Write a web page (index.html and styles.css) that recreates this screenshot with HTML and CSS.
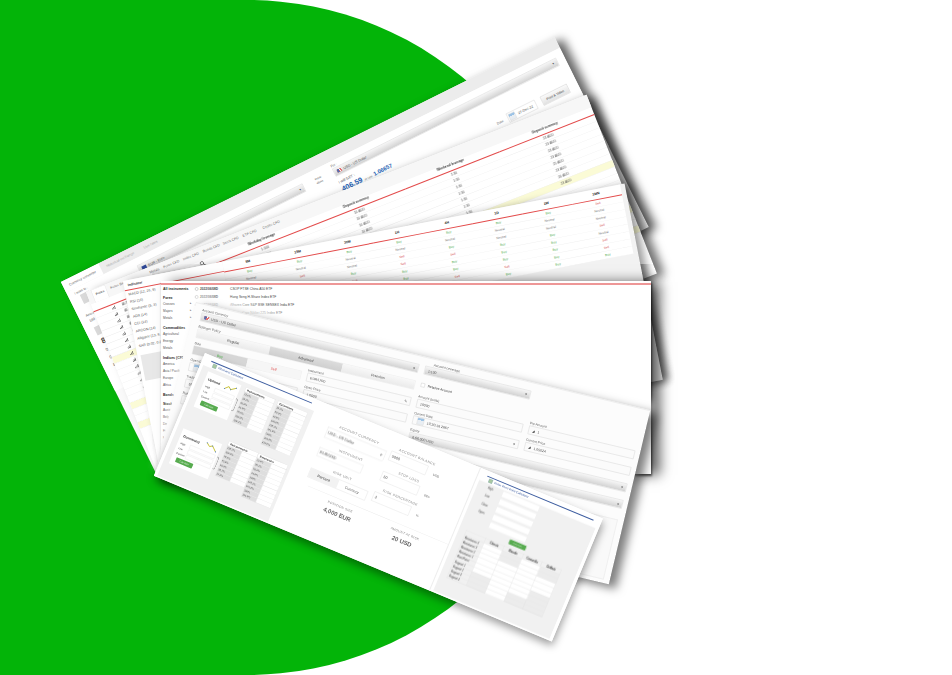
FILE: index.html
```html
<!DOCTYPE html>
<html lang="en">
<head>
<meta charset="utf-8">
<title>Trading tools</title>
<link rel="stylesheet" href="styles.css">
</head>
<body>
<div class="stage">
  <div class="blob"></div>
  <div class="fan">

    <section class="card card-a">
      <nav class="a-tabs">
        <span class="a-tab on">Currency converter</span>
        <span class="a-tab">Historical exchange</span>
        <span class="a-tab">Live rates</span>
      </nav>
      <div class="a-body">
        <div class="a-left">
          <div class="lbl">I want to :</div>
          <div class="sq"></div>
          <div class="lbl mt">Amount</div>
          <div class="a-amt">100</div>
          <div class="sq small"></div>
          <div class="a-big">81</div>
          <div class="a-n">0 1</div>
          <div class="a-n">0 1</div>
          <div class="a-n">81</div>
        </div>
        <div class="a-sel">
          <div class="select"><i class="flag eu"></i>EUR - Euro<b class="arrow">▾</b></div>
        </div>
        <div class="a-mid">inside<br>above</div>
        <div class="a-right">
          <div class="lbl">For :</div>
          <div class="select"><i class="flag us"></i>USD - US Dollar<b class="arrow">▾</b></div>
          <div class="a-get">I will GET :</div>
          <div class="a-val"><strong>406.59</strong><small>at rate</small><strong class="rate">1.06657</strong></div>
          <div class="a-date">
            <span class="lbl">Date</span>
            <span class="datebox"><i class="cal"></i>27-Dec-22</span>
            <span class="btn">Print &amp; Video</span>
          </div>
        </div>
      </div>
    </section>

    <section class="card card-b">
      <nav class="b-tabs">
        <span class="b-tab on">Forex</span><span class="b-tab">Forex Basket</span><span class="b-tab">Metals</span><span class="b-tab">Forex CFD</span><span class="b-tab">Index CFD</span><span class="b-tab">Bonds CFD</span><span class="b-tab">Stock CFD</span><span class="b-tab">ETF CFD</span><span class="b-tab">Crypto CFD</span>
      </nav>
      <table class="b-table">
        <thead>
          <tr><th class="c0"></th><th class="c1"><svg class="mag" viewBox="0 0 20 20"><circle cx="8" cy="8" r="5.5"/><path d="M12 12l6 6"/></svg></th><th>Weekday leverage</th><th>Deposit currency</th><th>Weekend leverage</th><th>Deposit currency</th></tr>
        </thead>
        <tbody>
          <tr><td class="c0"><svg class="bars" viewBox="0 0 12 12"><path d="M1 11h2V7H1zM5 11h2V4H5zM9 11h2V1H9z"/></svg>AUD/CAD</td><td></td><td>1:100</td><td>10 AUD</td><td>1:30</td><td>23 AUD</td></tr>
          <tr><td class="c0"><svg class="bars" viewBox="0 0 12 12"><path d="M1 11h2V7H1zM5 11h2V4H5zM9 11h2V1H9z"/></svg>AUD/CHF</td><td></td><td>1:100</td><td>10 AUD</td><td>1:30</td><td>23 AUD</td></tr>
          <tr><td class="c0"><svg class="bars" viewBox="0 0 12 12"><path d="M1 11h2V7H1zM5 11h2V4H5zM9 11h2V1H9z"/></svg>AUD/JPY</td><td></td><td>1:100</td><td>10 AUD</td><td>1:30</td><td>23 AUD</td></tr>
          <tr><td class="c0"><svg class="bars" viewBox="0 0 12 12"><path d="M1 11h2V7H1zM5 11h2V4H5zM9 11h2V1H9z"/></svg>AUD/NZD</td><td></td><td>1:100</td><td>10 AUD</td><td>1:30</td><td>23 AUD</td></tr>
          <tr><td class="c0"><svg class="bars" viewBox="0 0 12 12"><path d="M1 11h2V7H1zM5 11h2V4H5zM9 11h2V1H9z"/></svg>AUD/USD</td><td></td><td>1:100</td><td>10 AUD</td><td>1:30</td><td>25 AUD</td></tr>
          <tr><td class="c0"><svg class="bars" viewBox="0 0 12 12"><path d="M1 11h2V7H1zM5 11h2V4H5zM9 11h2V1H9z"/></svg>AUD/SGD</td><td></td><td>1:100</td><td>10 AUD</td><td>1:30</td><td>23 AUD</td></tr>
          <tr><td class="c0"><svg class="bars" viewBox="0 0 12 12"><path d="M1 11h2V7H1zM5 11h2V4H5zM9 11h2V1H9z"/></svg>CAD/CHF</td><td></td><td>1:100</td><td>10 CAD</td><td>1:30</td><td>26 AUD</td></tr>
          <tr class="y"><td class="c0"><svg class="bars" viewBox="0 0 12 12"><path d="M1 11h2V7H1zM5 11h2V4H5zM9 11h2V1H9z"/></svg>CAD/JPY</td><td></td><td>1:100</td><td>10 CAD</td><td>1:30</td><td>23 AUD</td></tr>
          <tr><td class="c0"><svg class="bars" viewBox="0 0 12 12"><path d="M1 11h2V7H1zM5 11h2V4H5zM9 11h2V1H9z"/></svg>SPX500</td><td></td><td></td><td></td><td></td><td></td></tr>
          <tr><td class="c0"><svg class="bars" viewBox="0 0 12 12"><path d="M1 11h2V7H1zM5 11h2V4H5zM9 11h2V1H9z"/></svg>SWI20</td><td></td><td></td><td></td><td></td><td></td></tr>
          <tr><td class="c0"><svg class="bars" viewBox="0 0 12 12"><path d="M1 11h2V7H1zM5 11h2V4H5zM9 11h2V1H9z"/></svg>TRY</td><td></td><td></td><td></td><td></td><td></td></tr>
          <tr><td class="c0"><svg class="bars" viewBox="0 0 12 12"><path d="M1 11h2V7H1zM5 11h2V4H5zM9 11h2V1H9z"/></svg>USD</td><td></td><td></td><td></td><td></td><td></td></tr>
          <tr><td class="c0"><svg class="bars" viewBox="0 0 12 12"><path d="M1 11h2V7H1zM5 11h2V4H5zM9 11h2V1H9z"/></svg>EUR</td><td></td><td></td><td></td><td></td><td></td></tr>
          <tr><td class="c0"><svg class="bars" viewBox="0 0 12 12"><path d="M1 11h2V7H1zM5 11h2V4H5zM9 11h2V1H9z"/></svg>GBP</td><td></td><td></td><td></td><td></td><td></td></tr>
          <tr class="y"><td class="c0"><svg class="bars" viewBox="0 0 12 12"><path d="M1 11h2V7H1zM5 11h2V4H5zM9 11h2V1H9z"/></svg>NZD</td><td></td><td></td><td></td><td></td><td></td></tr>
          <tr><td class="c0"><svg class="bars" viewBox="0 0 12 12"><path d="M1 11h2V7H1zM5 11h2V4H5zM9 11h2V1H9z"/></svg>CHF</td><td></td><td></td><td></td><td></td><td></td></tr>
          <tr><td class="c0"><svg class="bars" viewBox="0 0 12 12"><path d="M1 11h2V7H1zM5 11h2V4H5zM9 11h2V1H9z"/></svg>JPY</td><td></td><td></td><td></td><td></td><td></td></tr>
          <tr class="y"><td class="c0"><svg class="bars" viewBox="0 0 12 12"><path d="M1 11h2V7H1zM5 11h2V4H5zM9 11h2V1H9z"/></svg>CAD</td><td></td><td></td><td></td><td></td><td></td></tr>
        </tbody>
      </table>
    </section>

    <section class="card card-c">
      <aside class="c-side">
        <div class="c-head">Indicator</div>
        <div class="c-i">MACD (12, 26, 9)</div>
        <div class="c-i">RSI (14)</div>
        <div class="c-i">Stochastic (5, 3)</div>
        <div class="c-i">ADX (14)</div>
        <div class="c-i">CCI (14)</div>
        <div class="c-i">AROON (14)</div>
        <div class="c-i">Alligator (13, 8, 5)</div>
        <div class="c-i">SAR (0.02, 0.2)</div>
        <div class="c-box">Indicators</div>
      </aside>
      <table class="c-table">
        <thead><tr><th>5M</th><th>15M</th><th>30M</th><th>1H</th><th>4H</th><th>1D</th><th>1W</th><th>1MN</th></tr></thead>
        <tbody>
          <tr><td class="b">Buy</td><td class="b">Buy</td><td class="b">Buy</td><td class="b">Buy</td><td class="b">Buy</td><td class="b">Buy</td><td class="b">Buy</td><td class="s">Sell</td></tr>
          <tr><td class="n">Neutral</td><td class="n">Neutral</td><td class="n">Neutral</td><td class="n">Neutral</td><td class="n">Neutral</td><td class="n">Neutral</td><td class="n">Neutral</td><td class="n">Neutral</td></tr>
          <tr><td class="n">Neutral</td><td class="s">Sell</td><td class="n">Neutral</td><td class="s">Sell</td><td class="b">Buy</td><td class="n">Neutral</td><td class="n">Neutral</td><td class="n">Neutral</td></tr>
          <tr><td class="s">Sell</td><td class="b">Buy</td><td class="b">Buy</td><td class="s">Sell</td><td class="s">Sell</td><td class="b">Buy</td><td class="b">Buy</td><td class="s">Sell</td></tr>
          <tr><td class="n">Neutral</td><td class="s">Sell</td><td class="s">Sell</td><td class="b">Buy</td><td class="b">Buy</td><td class="b">Buy</td><td class="b">Buy</td><td class="n">Neutral</td></tr>
          <tr><td class="b">Buy</td><td class="b">Buy</td><td class="b">Buy</td><td class="b">Buy</td><td class="b">Buy</td><td class="b">Buy</td><td class="b">Buy</td><td class="s">Sell</td></tr>
          <tr><td class="s">Sell</td><td class="s">Sell</td><td class="b">Buy</td><td class="s">Sell</td><td class="s">Sell</td><td class="s">Sell</td><td class="b">Buy</td><td class="s">Sell</td></tr>
          <tr><td class="b">Buy</td><td class="n">Neutral</td><td class="b">Buy</td><td class="b">Buy</td><td class="b">Buy</td><td class="b">Buy</td><td class="b">Buy</td><td class="b">Buy</td></tr>
        </tbody>
      </table>
    </section>

    <section class="card card-d">
      <aside class="d-side">
        <div class="d-h first">All instruments</div>
        <div class="d-h">Forex</div>
        <div class="d-i">Crosses<b>▸</b></div>
        <div class="d-i">Majors<b>▸</b></div>
        <div class="d-i">Metals<b>▸</b></div>
        <div class="d-h">Commodities</div>
        <div class="d-i">Agricultural<b>▸</b></div>
        <div class="d-i">Energy<b>▸</b></div>
        <div class="d-i">Metals</div>
        <div class="d-h">Indices (CFD)</div>
        <div class="d-i">America</div>
        <div class="d-i">Asia / Pacific</div>
        <div class="d-i">Europe</div>
        <div class="d-i">Africa</div>
        <div class="d-h">Bonds (CFD)</div>
        <div class="d-h">Stocks (CFD)</div>
        <div class="d-i">Austria</div>
        <div class="d-i">Belgium</div>
        <div class="d-i">Denmark</div>
        <div class="d-i">Finland</div>
        <div class="d-i">France</div>
        <div class="d-i">Germany</div>
      </aside>
      <div class="d-list">
        <div class="d-row"><i class="radio"></i><b>2022/06/08D</b><span>CSOP FTSE China A50 ETF</span></div>
        <div class="d-row"><i class="radio"></i><b>2022/06/08D</b><span>Hang Seng H-Share Index ETF</span></div>
        <div class="d-row"><i class="radio"></i><b>2022/06/08D</b><span>iShares Core S&amp;P BSE SENSEX India ETF</span></div>
        <div class="d-row"><i class="radio"></i><b>2022/06/08D</b><span>iShares Core Nikkei 225 Index ETF</span></div>
      </div>
    </section>

    <section class="card card-e">
      <div class="e-grid">
        <div class="e-wide">
          <div class="lbl">Account Currency</div>
          <div class="select"><i class="flag us"></i>USD - US Dollar<b class="arrow">▾</b></div>
        </div>
        <div class="e-span2 e-lev">
          <div class="lbl">Account Leverage</div>
          <div class="select">1:100<b class="arrow">▾</b></div>
        </div>
        <div class="e-wide">
          <div class="lbl">Bollinger Policy</div>
          <div class="seg"><span>Regular</span><span class="dark">Advanced</span><span>Premium</span></div>
        </div>
        <div class="e-span2 e-check"><i class="box"></i>Relative Account</div>
        <div class="e-wide e-pair">
          <div class="e-side">
            <div class="lbl">Side</div>
            <div class="seg"><span class="buy">Buy</span><span class="sell">Sell</span></div>
          </div>
          <div class="e-inst">
            <div class="lbl">Instrument</div>
            <div class="input">EUR/USD<b class="pen">✎</b></div>
          </div>
        </div>
        <div>
          <div class="lbl">Amount (units)</div>
          <div class="input">10000</div>
        </div>
        <div>
          <div class="lbl">Pip Amount</div>
          <div class="input"><i class="mini">◢</i>1</div>
        </div>
        <div class="e-wide e-pair">
          <div class="e-side">
            <div class="lbl">Open Date</div>
            <div class="input"><i class="cal"></i>Jan 01</div>
          </div>
          <div class="e-inst">
            <div class="lbl">Open Price</div>
            <div class="input">1.0500</div>
          </div>
        </div>
        <div>
          <div class="lbl">Current Date</div>
          <div class="input"><i class="cal"></i>10:30:16 2667<b class="arrow">▾</b></div>
        </div>
        <div>
          <div class="lbl">Current Price</div>
          <div class="input"><i class="mini">◢</i>1.05024</div>
        </div>
        <div class="e-wide e-pair">
          <div class="e-side">
            <div class="lbl">Trading Size</div>
            <div class="input">10,000</div>
          </div>
          <div class="e-inst"></div>
        </div>
        <div class="e-span2">
          <div class="lbl">Equity</div>
          <div class="select">6.66.000 USD<b class="arrow">▾</b></div>
        </div>
        <div class="e-wide e-pair">
          <div class="e-side">
            <div class="lbl">Rollover</div>
            <div class="input">1.0200</div>
          </div>
          <div class="e-inst"></div>
        </div>
        <div class="e-span2">
          <div class="lbl">&nbsp;</div>
          <div class="select"><b class="arrow">▾</b></div>
        </div>
      </div>
      <div class="e-panel"></div>
    </section>

    <section class="card card-f">
      <div class="panel p1">
        <header class="p-head"><i class="p-ico"></i>Fibonacci Calculator</header>
        <div class="p-body">
          <div class="fib">
            <div class="fib-card">
              <div class="fib-top"><b>Uptrend</b>
                <svg class="trend" viewBox="0 0 60 36"><path class="tl" d="M4 30L20 14 32 24 54 8"/><circle cx="4" cy="30" r="2.5"/><circle cx="32" cy="24" r="2.5"/><circle cx="54" cy="8" r="2.5"/></svg>
              </div>
              <div class="fib-r"><span>High</span><i></i></div>
              <div class="fib-r"><span>Low</span><i></i></div>
              <div class="fib-r"><span>Custom</span><i></i></div>
              <div class="go">Calculate</div>
            </div>
            <div class="brace"></div>
            <table class="fib-t"><tr><th colspan="2">Retracements</th></tr><tr><td>23.6%</td><td></td></tr><tr><td>38.2%</td><td></td></tr><tr><td>50.0%</td><td></td></tr><tr><td>61.8%</td><td></td></tr><tr><td>78.6%</td><td></td></tr><tr><td>100.0%</td><td></td></tr><tr><td>138.2%</td><td></td></tr></table>
            <table class="fib-t"><tr><th colspan="2">Extensions</th></tr><tr><td>38.2%</td><td></td></tr><tr><td>50.0%</td><td></td></tr><tr><td>61.8%</td><td></td></tr><tr><td>100.0%</td><td></td></tr><tr><td>138.2%</td><td></td></tr><tr><td>161.8%</td><td></td></tr><tr><td>200%</td><td></td></tr><tr><td>261.8%</td><td></td></tr><tr><td>423.6%</td><td></td></tr></table>
          </div>
          <div class="fib low">
            <div class="fib-card">
              <div class="fib-top"><b>Downtrend</b>
                <svg class="trend" viewBox="0 0 60 36"><path class="tl" d="M4 6L20 18 32 10 54 30"/><circle cx="4" cy="6" r="2.5"/><circle cx="32" cy="10" r="2.5"/><circle cx="54" cy="30" r="2.5"/></svg>
              </div>
              <div class="fib-r"><span>High</span><i></i></div>
              <div class="fib-r"><span>Low</span><i></i></div>
              <div class="fib-r"><span>Custom</span><i></i></div>
              <div class="go">Calculate</div>
            </div>
            <div class="brace"></div>
            <table class="fib-t"><tr><th colspan="2">Retracements</th></tr><tr><td>138.2%</td><td></td></tr><tr><td>100.0%</td><td></td></tr><tr><td>78.6%</td><td></td></tr><tr><td>61.8%</td><td></td></tr><tr><td>50.0%</td><td></td></tr><tr><td>38.2%</td><td></td></tr><tr><td>23.6%</td><td></td></tr></table>
            <table class="fib-t"><tr><th colspan="2">Extensions</th></tr><tr><td>23.6%</td><td></td></tr><tr><td>38.2%</td><td></td></tr><tr><td>50.0%</td><td></td></tr><tr><td>61.8%</td><td></td></tr><tr><td>100%</td><td></td></tr><tr><td>138.2%</td><td></td></tr><tr><td>161.8%</td><td></td></tr><tr><td>200%</td><td></td></tr><tr><td>261.8%</td><td></td></tr></table>
          </div>
        </div>
      </div>
      <div class="panel p2">
        <div class="calc">
          <div class="fld"><label>Account currency</label><div class="ctl tall">USD - US Dollar<b>▾</b></div></div>
          <div class="fld up"><label>Account balance</label><div class="ctl">5000<em>USD</em></div></div>
          <div class="fld"><label>Instrument</label><div class="ctl narrow">EUR/USD</div></div>
          <div class="fld up"><label>Stop loss</label><div class="ctl">50<em>pips</em></div></div>
          <div class="fld"><label>Risk unit</label><div class="tog"><span class="on">Percent</span><span>Currency</span></div></div>
          <div class="fld up"><label>Risk percentage</label><div class="ctl">2<em>%</em></div></div>
        </div>
        <div class="res">
          <div><label>Position size</label><strong>4,000 EUR</strong></div>
          <div><label>Amount at risk</label><strong>20 USD</strong></div>
        </div>
      </div>
      <div class="panel p3">
        <header class="p-head"><i class="p-ico"></i>Forex Pivot Point Calculator</header>
        <div class="p-body">
          <div class="piv"><span>High</span><i></i></div>
          <div class="piv"><span>Low</span><i></i></div>
          <div class="piv"><span>Close</span><i></i></div>
          <div class="piv"><span>Open</span><i></i></div>
          <div class="piv"><span></span><i></i></div>
          <div class="go">Calculate</div>
          <table class="piv-t">
            <tr><th></th><th>Classic</th><th>Woodie</th><th>Camarilla</th><th>DeMark</th></tr>
            <tr><td>Resistance 4</td><td></td><td class="g"></td><td></td><td class="g"></td></tr>
            <tr><td>Resistance 3</td><td></td><td class="g"></td><td></td><td class="g"></td></tr>
            <tr><td>Resistance 2</td><td></td><td></td><td></td><td></td></tr>
            <tr><td>Resistance 1</td><td></td><td></td><td></td><td></td></tr>
            <tr><td>Pivot Point</td><td></td><td></td><td></td><td></td></tr>
            <tr><td>Support 1</td><td></td><td></td><td></td><td class="g"></td></tr>
            <tr><td>Support 2</td><td class="g"></td><td></td><td></td><td class="g"></td></tr>
            <tr><td>Support 3</td><td class="g"></td><td></td><td class="g"></td><td class="g"></td></tr>
            <tr><td>Support 4</td><td class="g"></td><td></td><td class="g"></td><td class="g"></td></tr>
          </table>
        </div>
      </div>
    </section>

  </div>
</div>
</body>
</html>
```

FILE: styles.css
```css
* { box-sizing: border-box; }
html, body { margin: 0; background: #fff; }
.stage {
  position: relative;
  width: 952px;
  height: 675px;
  overflow: hidden;
  font-family: "Liberation Sans", Arial, sans-serif;
  color: #444;
}
.blob {
  position: absolute;
  left: 0;
  top: 0;
  width: 585px;
  height: 675px;
  background: #03b408;
  border-radius: 0 337.5px 337.5px 0;
}
.fan { position: absolute; inset: 0; filter: blur(0.45px); }

/* Every card is a page drawn three times larger and scaled down */
.card {
  position: absolute;
  transform-origin: 0 0;
  background: #fff;
  overflow: hidden;
  font-size: 10.5px;
}
.card-a { left: 61px; top: 282px; width: 1653px; height: 636px; transform: rotate(-26.4deg) scale(.3333); background: #fafafa; box-shadow: 21px 15px 30px rgba(0,0,0,.6); overflow: visible; }
.card-b { left: 86.4px; top: 292px; width: 1614px; height: 576px; transform: rotate(-21.5deg) scale(.3333); box-shadow: 21px 12px 30px rgba(0,0,0,.55); overflow: visible; }
.card-c { left: 123px; top: 281px; width: 1533px; height: 600px; transform: rotate(-11deg) scale(.3333); background: #f2f2f2; box-shadow: 15px 6px 24px rgba(0,0,0,.4); display: flex; overflow: visible; }
.card-d { left: 161px; top: 281px; width: 1470px; height: 579px; transform: scale(.3333); background: #f6f6f6; box-shadow: 27px 3px 36px rgba(0,0,0,.62), 3px 6px 6px rgba(0,0,0,.6); display: flex; border-top: 6px solid #fff; overflow: visible; }
.card-e { left: 196px; top: 302px; width: 1401px; height: 537px; transform: rotate(13.4deg) scale(.3333); background: #fcfcfc; box-shadow: 24px 9px 30px rgba(0,0,0,.5), 0 -24px 30px rgba(255,255,255,.85); padding: 8px 0 0; border-top: 3px solid #eee; overflow: visible; }
.card-f { left: 205px; top: 353px; width: 1293px; height: 399px; transform: rotate(22.6deg) scale(.3333); box-shadow: 6px 12px 24px rgba(0,0,0,.4); display: flex; overflow: visible; }

/* Shared controls */
.lbl { font-size: 10px; color: #666; line-height: 15px; height: 15px; }
.lbl.mt { margin-top: 27px; }
.select, .input {
  display: flex;
  align-items: center;
  height: 27px;
  padding: 0 9px;
  border: 2px solid #e2e2e2;
  background: linear-gradient(#f6f6f6, #d2d2d2);
  font-size: 10.5px;
  color: #555;
}
.input { background: #fbfbfb; }
.arrow, .pen { margin-left: auto; font-weight: 400; color: #555; }
.flag { width: 15px; height: 10px; margin-right: 6px; flex: none; }
.flag.us { background: linear-gradient(90deg, #5a6cab 45%, transparent 45%), repeating-linear-gradient(#e07070 0 2px, #fff 2px 4px); }
.flag.eu { background: #2f4a9c; }
.sq { width: 30px; height: 30px; margin: 3px 0 0 12px; background: #d9d9d9; }
.sq.small { margin-top: 12px; width: 27px; height: 27px; margin-left: 6px; }

/* Card A: converter */
.a-tabs { display: flex; height: 36px; background: #ececec; }
.a-tab { padding: 0 15px 0 18px; line-height: 36px; font-size: 10.5px; color: #aaa; }
.a-tab.on { background: #fff; color: #555; padding-right: 18px; }
.a-body { display: grid; grid-template-columns: 225px 555px 99px 750px; background: #fff; height: 330px; padding-top: 6px; }
.a-left { padding-left: 21px; }
.a-amt { margin-top: 0; width: 60px; font-size: 11px; padding: 5px 3px; }
.a-big { font-size: 24px; font-weight: 700; margin: 6px 0 0 9px; line-height: 30px; }
.a-n { margin: 3px 0 0 9px; font-size: 13px; line-height: 22px; }
.a-sel { padding-top: 15px; }
.a-mid { padding-top: 15px; text-align: center; font-size: 8px; line-height: 13px; }
.a-get { margin-top: 12px; font-size: 11px; line-height: 15px; }
.a-val { display: flex; align-items: baseline; gap: 6px; margin-top: 3px; line-height: 24px; height: 24px; color: #1d5fb5; }
.a-val strong { font-size: 22px; }
.a-val .rate { font-size: 17px; }
.a-val small { font-size: 9px; color: #777; }
.a-date { display: flex; justify-content: flex-end; align-items: center; gap: 6px; margin-top: 3px; padding-right: 6px; }
.a-date .lbl { margin-right: 9px; }
.datebox { display: flex; align-items: center; width: 96px; height: 30px; border: 2px solid #e2e2e2; background: #fff; font-size: 10.5px; }
.cal { width: 21px; height: 21px; margin: 0 9px 0 3px; background: linear-gradient(#9cc3e6 35%, #e9eef3 35%); border: 1px solid #ccc; flex: none; }
.btn { display: block; width: 90px; height: 30px; line-height: 27px; text-align: center; font-size: 10px; border: 2px solid #ddd; background: linear-gradient(#fafafa, #e2e2e2); margin-left: 12px; }

/* Card B: leverage table */
.b-tabs { display: flex; height: 40px; padding-left: 15px; background: #f7f7f7; gap: 3px; }
.b-tab { padding: 9px 9px 0; font-size: 10.5px; color: #777; white-space: nowrap; width: 61px; }
.b-tab:nth-child(2) { width: 124px; }
.b-tab:nth-child(3) { width: 41px; }
.b-tab.on { background: #fff; color: #333; width: 45px; border: 1px solid #ddd; border-bottom: 0; }
.b-table { border-collapse: collapse; table-layout: fixed; width: 1614px; font-size: 10px; color: #555; }
.b-table thead th { height: 23px; font-size: 10px; font-weight: 700; color: #333; border-bottom: 3px solid #e34b4b; padding: 0; text-align: center; width: 240px; vertical-align: top; }
.b-table thead th.c0 { width: 156px; }
.b-table thead th.c1 { width: 156px; text-align: right; padding-right: 30px; }
.b-table td { height: 21px; padding: 0; text-align: center; border-bottom: 1px solid #eaeaea; white-space: nowrap; }
.b-table td.c0 { text-align: left; padding-left: 54px; overflow: hidden; }
.b-table tr.y td { background: #fbfbd6; }
.mag { width: 18px; height: 18px; fill: none; stroke: #333; stroke-width: 2; }
.bars { width: 12px; height: 12px; fill: #444; margin-right: 21px; vertical-align: -2px; }

/* Card C: signals */
.c-side { width: 303px; flex: none; background: #fff; height: 600px; }
.c-head { height: 31px; line-height: 28px; padding-left: 12px; font-size: 10.5px; font-weight: 700; color: #333; border-bottom: 3px solid #e34b4b; }
.c-i { height: 22.5px; line-height: 22.5px; padding-left: 9px; font-size: 10.5px; color: #555; }
.c-box { margin: 18px 0 0 9px; width: 165px; height: 78px; line-height: 66px; background: #e8e8e8; text-align: center; font-size: 10.5px; }
.c-table { border-collapse: collapse; table-layout: fixed; width: 1216px; background: #fff; font-size: 9.5px; height: 210px; }
.c-table th { height: 31px; padding: 0 0 3px; font-size: 10.5px; color: #222; border-bottom: 3px solid #e34b4b; text-align: center; }
.c-table td { height: 22.5px; padding: 0; text-align: center; border-bottom: 1px solid #eee; }
.c-table .b { color: #45a83f; }
.c-table .n { color: #777; }
.c-table .s { color: #d0393b; }

/* Card D: instruments */
.card-d::before { content: ""; position: absolute; left: 0; right: 0; top: 0; height: 6px; background: #ee9797; }
.d-side { width: 96px; flex: none; padding: 9px 0 0 6px; background: #fff; height: 573px; }
.d-h { height: 15px; line-height: 15px; margin-top: 12px; font-size: 10.5px; font-weight: 700; color: #222; white-space: nowrap; }
.d-h.first { margin-top: 0; margin-bottom: 10px; }
.d-i { display: flex; justify-content: space-between; height: 21px; line-height: 21px; font-size: 9.5px; padding-right: 3px; color: #555; }
.d-i b { font-weight: 400; font-size: 9px; }
.d-list { flex: 1; background: #fff; padding: 6px 0 0 6px; }
.d-row { display: flex; align-items: center; height: 24px; font-size: 10px; color: #444; }
.d-row b { width: 90px; font-size: 9.5px; }
.radio { width: 10px; height: 10px; margin-right: 5px; border: 1px solid #777; border-radius: 50%; }

/* Card E: position form */
.e-grid { display: grid; grid-template-columns: 672px 327px 327px; column-gap: 18px; grid-auto-rows: 51px; padding-left: 24px; }
.e-wide { min-width: 0; }
.e-span2 { grid-column: span 2; }
.e-lev { width: 327px; }
.e-lev .lbl { padding-left: 24px; }
.e-check { display: flex; align-items: center; font-size: 10px; padding-bottom: 6px; }
.box { width: 12px; height: 12px; border: 1px solid #bbb; margin-right: 9px; background: #fff; }
.seg { display: flex; height: 27px; border: 1px solid #ddd; }
.seg span { flex: 1; text-align: center; line-height: 25px; font-size: 10.5px; background: linear-gradient(#f8f8f8, #eaeaea); }
.seg .dark { background: linear-gradient(#dcdcdc, #cfcfcf); }
.seg .buy { color: #3fae3a; background: #d6d6d6; }
.seg .sell { color: #e05252; background: #f6f6f6; }
.e-pair { display: flex; gap: 18px; }
.e-side { width: 333px; flex: none; }
.e-inst { flex: 1; }
.mini { font-style: normal; font-size: 10px; margin-right: 9px; color: #444; }
.e-panel { margin: 24px 18px 0 auto; width: 900px; height: 186px; border: 3px solid #f0f0f0; background: #f9f9f9; }

/* Card F: calculators */
.panel { height: 399px; flex: none; overflow: hidden; }
.p1 { width: 378px; background: #fff; }
.p2 { width: 516px; background: #fff; padding: 39px 36px 0 48px; }
.p3 { width: 399px; background: #fff; border-left: 3px solid #eee; }
.p-head { display: flex; align-items: center; margin: 14px 24px 0 27px; height: 21px; border-top: 3px solid #3d5da0; padding-left: 9px; font-size: 9px; color: #3d5da0; white-space: nowrap; }
.p-ico { width: 12px; height: 12px; background: #a8c8a0; border: 1px solid #8ab; margin-right: 6px; flex: none; }
.p-body { margin: 0 9px; height: 360px; background: #f1f1f1; }
.p1 .p-body { padding: 12px 0 0 21px; }
.fib { display: flex; height: 168px; }
.fib.low { height: 180px; margin-left: -3px; }
.fib-card { width: 108px; height: 114px; background: #fff; padding: 6px 6px 0 9px; flex: none; }
.fib.low .fib-card { margin-top: 18px; width: 126px; }
.fib-top { display: flex; justify-content: space-between; align-items: center; height: 30px; }
.fib-top b { font-size: 10px; color: #333; }
.trend { width: 40px; height: 26px; fill: #4a78c8; flex: none; }
.tl { fill: none; stroke: #c9c23a; stroke-width: 4; }
.fib-r { display: flex; align-items: center; height: 16px; font-size: 7.5px; }
.fib-r span { width: 30px; }
.fib-r i { flex: 1; height: 13px; background: #fff; border: 1px solid #e4e4e4; }
.go { width: 54px; height: 15px; margin: 4px 0 0 6px; border-radius: 2px; background: #57ab4f; color: #cfe9cb; font-size: 7px; line-height: 15px; text-align: center; }
.brace { width: 8px; height: 42px; margin: 42px 7px 0 0; border: 2px solid #999; border-left: 0; border-radius: 0 8px 8px 0; flex: none; }
.fib.low .brace { margin-top: 57px; }
.fib-t { border-collapse: collapse; table-layout: fixed; width: 96px; margin-right: 9px; font-size: 7.5px; flex: none; align-self: flex-start; background: #fff; }
.fib.low .fib-t { margin-right: 0; }
.fib-t th { height: 14px; font-size: 8.5px; color: #333; text-align: left; padding: 0 0 0 6px; border: 1px solid #ddd; white-space: nowrap; overflow: hidden; }
.fib-t td { height: 14px; padding: 0 0 0 2px; border: 1px solid #e4e4e4; }
.fib-t td:first-child { width: 33px; background: #dedede; }

.calc { display: grid; grid-template-columns: 192px 156px; column-gap: 12px; grid-auto-rows: 66px; }
.fld label, .res label { display: block; height: 15px; line-height: 15px; font-size: 10.5px; color: #888; text-transform: uppercase; letter-spacing: .9px; white-space: nowrap; text-align: center; }
.fld { padding-top: 3px; }
.fld.up { margin-top: -6px; }
.ctl { position: relative; display: flex; align-items: center; width: 120px; height: 30px; margin-top: 4px; padding-left: 6px; border: 1px solid #ddd; font-size: 11.5px; color: #555; background: #fff; }
.ctl.tall { width: 192px; height: 35px; }
.ctl.narrow { width: 144px; }
.ctl b { margin-left: auto; margin-right: 9px; color: #222; font-size: 10px; }
.ctl em { position: absolute; left: 140px; top: 12px; font-style: normal; font-size: 9.5px; color: #666; }
.tog { display: flex; margin-top: 6px; width: 186px; height: 30px; border: 1px solid #ddd; }
.tog span { flex: 1; text-align: center; line-height: 28px; font-size: 11px; color: #666; }
.tog .on { background: #f2f2f2; font-weight: 700; }
.res { display: grid; grid-template-columns: 228px 192px; margin: 12px -36px 0 12px; padding-top: 12px; border-top: 1px solid #e6e6e6; text-align: center; }
.res label { font-size: 9.5px; }
.res strong { display: block; margin-top: 8px; font-size: 18px; color: #666; white-space: nowrap; }

.p3 .p-body { padding-top: 0; position: relative; }
.piv { display: flex; align-items: center; height: 25px; padding-left: 33px; font-size: 8px; }
.piv span { width: 48px; }
.piv i { width: 117px; height: 17px; background: #fff; }
.p3 .go { margin: 4px 0 0 154px; }
.piv-t { border-collapse: collapse; table-layout: fixed; width: 311px; margin: 9px 0 0 21px; font-size: 8px; background: #fff; }
.piv-t th { height: 15.5px; padding: 0; font-size: 8px; color: #333; background: #f1f1f1; border: 1px solid #ddd; }
.piv-t th:first-child { width: 63px; }
.piv-t td { height: 15.5px; padding: 0; border: 1px solid #ddd; white-space: nowrap; }
.piv-t td:first-child { color: #333; background: #f1f1f1; padding-left: 4px; }
.piv-t .g { background: #ececec; }
```
